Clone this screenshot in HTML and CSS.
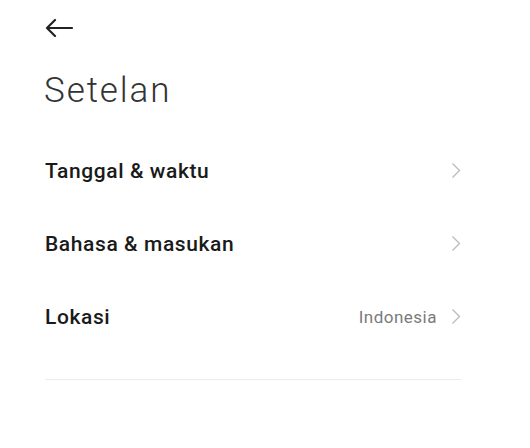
FILE: index.html
```html
<!DOCTYPE html>
<html lang="id">
<head>
  <meta charset="UTF-8" />
  <title>Setelan</title>
  <meta name="viewport" content="width=device-width, initial-scale=1.0" />
  <link rel="stylesheet" href="styles.css">
</head>
<body>
  <div class="page">
    <div class="topbar">
      <svg class="back" width="28" height="20" viewBox="0 0 28 20">
        <path d="M27 10H2M10 2L2 10L10 18" fill="none" stroke="#222" stroke-width="2.2" stroke-linecap="round" stroke-linejoin="round"/>
      </svg>
    </div>

    <h1 class="title">Setelan</h1>

    <ul class="list">
      <li class="row">
        <span class="label">Tanggal &amp; waktu</span>
        <span class="right">
          <svg class="chev" width="10" height="17" viewBox="0 0 10 17"><path d="M1.5 1.5L8.5 8.5L1.5 15.5" fill="none" stroke="#bdbdbd" stroke-width="1.4"/></svg>
        </span>
      </li>
      <li class="row">
        <span class="label">Bahasa &amp; masukan</span>
        <span class="right">
          <svg class="chev" width="10" height="17" viewBox="0 0 10 17"><path d="M1.5 1.5L8.5 8.5L1.5 15.5" fill="none" stroke="#bdbdbd" stroke-width="1.4"/></svg>
        </span>
      </li>
      <li class="row">
        <span class="label">Lokasi</span>
        <span class="right">
          <span class="value">Indonesia</span>
          <svg class="chev" width="10" height="17" viewBox="0 0 10 17"><path d="M1.5 1.5L8.5 8.5L1.5 15.5" fill="none" stroke="#bdbdbd" stroke-width="1.4"/></svg>
        </span>
      </li>
    </ul>

    <div class="divider"></div>
  </div>
</body>
</html>
```

FILE: styles.css
```css
body {
  margin: 0;
  background: #ffffff;
  color: #1a1a1a;
  font-family: Roboto, "Liberation Sans", sans-serif;
}
.page {
  padding: 0 69px 0 44px;
}
.topbar {
  height: 56px;
  display: flex;
  align-items: center;
  padding-left: 1px;
}
.back {
  display: block;
}
.title {
  margin: 15px 0 0 0;
  font-weight: 300;
  font-size: 35px;
  line-height: 40px;
  color: #333333;
  letter-spacing: 1.9px;
}
.list {
  list-style: none;
  margin: 23px 0 0 0;
  padding: 0 0 0 1px;
}
.row {
  height: 73px;
  display: flex;
  align-items: center;
  justify-content: space-between;
}
.label {
  font-size: 21px;
  font-weight: 500;
  color: #1a1a1a;
  letter-spacing: 0.6px;
}
.right {
  display: flex;
  align-items: center;
  gap: 14px;
}
.value {
  font-size: 17px;
  color: #7a7a7a;
  letter-spacing: 0.5px;
}
.chev {
  display: block;
}
.divider {
  margin: 26px 0 0 1px;
  height: 1px;
  background: #ececec;
}
```
